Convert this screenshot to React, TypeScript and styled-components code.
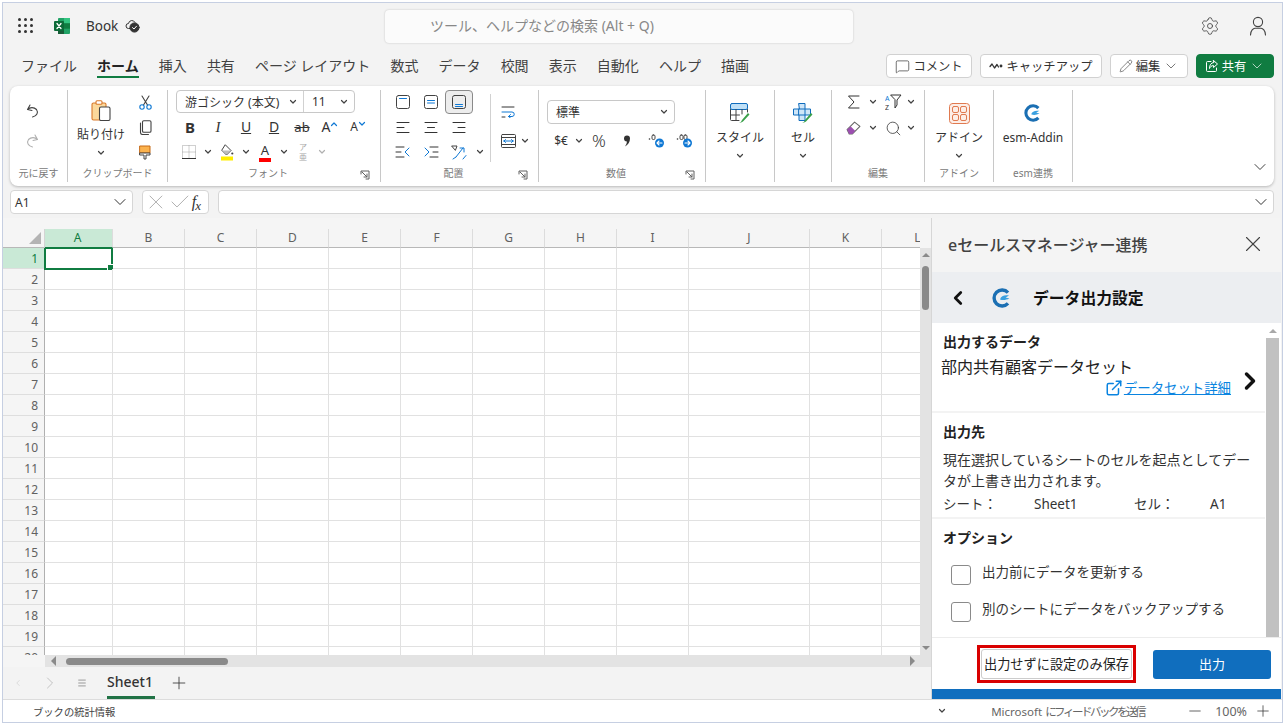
import React from 'react';
import styled, { createGlobalStyle } from 'styled-components';
import { Settings, MessageSquare, Pencil, X, Check, ChevronDown, ChevronLeft, ChevronRight, Plus, Minus, Menu, Search, ExternalLink } from 'lucide-react';

const FONT = `"Noto Sans", "Noto Sans CJK JP", sans-serif`;

const GlobalStyle = createGlobalStyle`
  html, body { margin: 0; padding: 0; background: #fff; }
  body { font-family: ${FONT}; color: #242424; }
  * { box-sizing: border-box; }
`;

const Page = styled.div`
  width: 1284px;
  height: 724px;
  padding: 2px 1px 1px 2px;
  background: #fff;
  overflow: hidden;
`;

const Window = styled.div`
  width: 100%;
  height: 100%;
  border: 1px solid #c6cfe2;
  background: #f3f3f3;
  display: flex;
  flex-direction: column;
`;

/* title bar */
const TitleBar = styled.div`
  height: 45px;
  flex: none;
  display: flex;
  align-items: center;
  padding-left: 15px;
`;

const Waffle = styled.div`
  width: 15px;
  display: grid;
  grid-template-columns: repeat(3, 3px);
  gap: 3px;
  margin-right: 21px;
  span { width: 3px; height: 3px; background: #333; border-radius: 50%; }
`;

const BookName = styled.span`
  font-size: 13.5px;
  line-height: 20px;
  color: #333;
  margin: 0 7px 0 16px;
`;

const SearchBox = styled.div`
  position: absolute;
  left: 385px;
  top: 10px;
  width: 468px;
  height: 33px;
  background: #fbfbfb;
  border-radius: 4px;
  box-shadow: 0 0 2px rgba(0, 0, 0, 0.22);
  padding-left: 45px;
  font-size: 14px;
  line-height: 32px;
  color: #888;
`;

const TitleRight = styled.div`
  margin-left: auto;
  display: flex;
  align-items: center;
  gap: 29px;
  padding-right: 15px;
`;

/* tab row */
const TabRow = styled.div`
  height: 38px;
  flex: none;
  display: flex;
  align-items: flex-start;
  padding: 6px 8px 0 18px;
`;

const Tab = styled.div<{ $active?: boolean }>`
  font-size: 14px;
  line-height: 24px;
  height: 24px;
  margin-right: 20.1px;
  color: ${p => (p.$active ? '#242424' : '#424242')};
  font-weight: ${p => (p.$active ? 700 : 400)};
  border-bottom: 2px solid ${p => (p.$active ? '#107c41' : 'transparent')};
  white-space: nowrap;
`;

const TabActions = styled.div`
  margin-left: auto;
  display: flex;
  gap: 8px;
`;

const ActionButton = styled.div<{ $w: number; $primary?: boolean }>`
  width: ${p => p.$w}px;
  height: 24px;
  display: flex;
  align-items: center;
  justify-content: center;
  gap: 3px;
  border-radius: 4px;
  font-size: 12.3px;
  white-space: nowrap;
  color: ${p => (p.$primary ? '#fff' : '#333')};
  background: ${p => (p.$primary ? '#107c41' : '#fff')};
  border: 1px solid ${p => (p.$primary ? '#107c41' : '#d1d1d1')};
`;

/* ribbon */
const Ribbon = styled.div`
  height: 100px;
  flex: none;
  margin: 0 8px 0 7px;
  padding-top: 4px;
  background: #fff;
  border-radius: 8px;
  box-shadow: 0 1px 3px rgba(0, 0, 0, 0.25);
  display: flex;
  position: relative;
`;

const Group = styled.div<{ $w: number }>`
  width: ${p => p.$w}px;
  height: 92px;
  flex: none;
  border-right: 1px solid #c8c8c8;
  display: flex;
  flex-direction: column;
`;

const GroupBody = styled.div<{ $pl?: number }>`
  height: 74px;
  flex: none;
  display: flex;
  padding-left: ${p => p.$pl ?? 0}px;
`;

const GroupFoot = styled.div`
  height: 18px;
  display: flex;
  align-items: center;
`;

const GroupLabel = styled.div`
  flex: 1;
  text-align: center;
  font-size: 10px;
  line-height: 18px;
  color: #7a7a7a;
  white-space: nowrap;
`;

const Launcher = styled.div`
  width: 12px;
  margin: 3px 8px 0 -8px;
`;

const Stack = styled.div<{ $w?: number; $gap?: number; $pt?: number }>`
  display: flex;
  flex-direction: column;
  width: ${p => (p.$w ? `${p.$w}px` : 'auto')};
  gap: ${p => p.$gap ?? 0}px;
  padding-top: ${p => p.$pt ?? 0}px;
`;

const Row = styled.div<{ $gap?: number; $h?: number; $pl?: number }>`
  display: flex;
  align-items: center;
  height: ${p => p.$h ?? 24}px;
  gap: ${p => p.$gap ?? 0}px;
  padding-left: ${p => p.$pl ?? 0}px;
`;

const Cellule = styled.div<{ $w: number; $h?: number; $on?: boolean }>`
  width: ${p => p.$w}px;
  height: ${p => p.$h ?? 24}px;
  flex: none;
  display: flex;
  align-items: center;
  justify-content: center;
  border-radius: 4px;
  background: ${p => (p.$on ? '#ededed' : 'transparent')};
  border: ${p => (p.$on ? '1px solid #8a8a8a' : 'none')};
`;

const BigLabel = styled.div`
  font-size: 12px;
  line-height: 18px;
  color: #333;
  text-align: center;
  white-space: nowrap;
`;

const BigButton = styled.div<{ $pt?: number }>`
  display: flex;
  flex-direction: column;
  align-items: center;
  width: 100%;
  padding-top: ${p => p.$pt ?? 7}px;
`;

const BigIcon = styled.div<{ $mb?: number }>`
  height: 26px;
  display: flex;
  align-items: center;
  justify-content: center;
  margin-bottom: ${p => p.$mb ?? 3}px;
`;

const BelowChevron = styled.div`
  margin-top: 6px;
  height: 6px;
`;

const Combo = styled.div<{ $w: number }>`
  width: ${p => p.$w}px;
  height: 24px;
  border: 1px solid #c8c8c8;
  border-radius: 4px;
  display: flex;
  align-items: center;
  background: #fff;
  font-size: 12px;
  color: #333;
`;

const ComboPart = styled.div<{ $w: number; $divider?: boolean }>`
  width: ${p => p.$w}px;
  height: 100%;
  padding: 0 6px 0 8px;
  display: flex;
  align-items: center;
  justify-content: space-between;
  white-space: nowrap;
  border-right: ${p => (p.$divider ? '1px solid #d1d1d1' : 'none')};
`;

const Glyph = styled.span<{ $size?: number; $weight?: number; $italic?: boolean; $deco?: string; $color?: string; $serif?: boolean }>`
  font-size: ${p => p.$size ?? 14}px;
  line-height: 16px;
  font-weight: ${p => p.$weight ?? 400};
  font-style: ${p => (p.$italic ? 'italic' : 'normal')};
  font-family: ${p => (p.$serif ? '"Liberation Serif", serif' : FONT)};
  text-decoration: ${p => p.$deco ?? 'none'};
  color: ${p => p.$color ?? '#333'};
`;

const FxSub = styled.span`
  font-size: 13px;
  position: relative;
  top: 3px;
  margin-left: -1px;
`;

const Caret = styled.span`
  align-self: flex-start;
  margin: 6px 0 0 0;
`;

const Phonetic = styled.span`
  display: flex;
  flex-direction: column;
  align-items: center;
  font-size: 8px;
  line-height: 10px;
  color: #a8a8a8;
`;

const InnerSeparator = styled.div`
  width: 1px;
  height: 68px;
  margin: 4px 0 0 3px;
  background: #d1d1d1;
`;

const CollapseRibbon = styled.div`
  position: absolute;
  right: 4px;
  bottom: 4px;
`;

/* formula bar */
const FormulaBar = styled.div`
  height: 24px;
  flex: none;
  margin: 4px 8px 4px 7px;
  display: flex;
  gap: 9px;
`;

const FormulaField = styled.div<{ $w?: number; $grow?: boolean }>`
  width: ${p => (p.$w ? `${p.$w}px` : 'auto')};
  flex: ${p => (p.$grow ? 1 : 'none')};
  background: #fff;
  border: 1px solid #d6d6d6;
  border-radius: 4px;
  display: flex;
  align-items: center;
  justify-content: space-between;
  padding: 0 2px 0 4px;
  font-size: 12px;
  color: #333;
`;

const FormulaTools = styled.div`
  display: flex;
  align-items: center;
  justify-content: space-between;
  width: 100%;
  margin-left: -3px;
  padding-right: 2px;
`;

/* workspace */
const Workspace = styled.div`
  height: 482px;
  flex: none;
  display: flex;
  border-bottom: 1px solid #dcdcdc;
`;

const SheetColumn = styled.div`
  width: 928px;
  flex: none;
  display: flex;
  flex-direction: column;
  padding-top: 11px;
  background: #f5f5f5;
`;

const SheetHeaders = styled.div`
  height: 19px;
  flex: none;
  display: flex;
  overflow: hidden;
  width: 917px;
`;

const Corner = styled.div`
  width: 42px;
  flex: none;
  display: flex;
  align-items: flex-end;
  justify-content: flex-end;
  padding: 0 3px 3px 0;
  border-right: 1px solid #d4d4d4;
  border-bottom: 1px solid #b8b8b8;
`;

const ColHead = styled.div<{ $w: number; $on?: boolean }>`
  width: ${p => p.$w}px;
  flex: none;
  text-align: center;
  padding-right: ${p => (p.$on ? 2 : 0)}px;
  font-size: 12px;
  line-height: 18px;
  color: ${p => (p.$on ? '#107c41' : '#616161')};
  background: ${p => (p.$on ? '#c9e9d6' : 'transparent')};
  border-right: 1px solid #dcdcdc;
  border-bottom: 1px solid ${p => (p.$on ? '#107c41' : '#b8b8b8')};
`;

const SheetBody = styled.div`
  height: 407px;
  flex: none;
  display: flex;
`;

const Cells = styled.div`
  width: 917px;
  flex: none;
  overflow: hidden;
  background: #fff;
`;

const GridRow = styled.div`
  display: flex;
  height: 21px;
`;

const RowHead = styled.div<{ $on?: boolean }>`
  width: 42px;
  flex: none;
  padding-right: 6px;
  text-align: right;
  font-size: 12px;
  line-height: 22px;
  color: ${p => (p.$on ? '#107c41' : '#616161')};
  background: ${p => (p.$on ? '#c9e9d6' : '#f5f5f5')};
  border-right: 1px solid #b0b0b0;
  border-bottom: 1px solid #dedede;
`;

const GridCell = styled.div<{ $w: number }>`
  width: ${p => p.$w}px;
  flex: none;
  position: relative;
  border-right: 1px solid #e1e1e1;
  border-bottom: 1px solid #e1e1e1;
`;

const Selection = styled.div`
  position: absolute;
  left: -1px;
  top: -1px;
  right: -1px;
  bottom: -2px;
  border: 2px solid #107c41;
  &::after {
    content: '';
    position: absolute;
    right: -3px;
    bottom: -3px;
    width: 5px;
    height: 5px;
    background: #107c41;
    border: 1px solid #fff;
  }
`;

const VScroll = styled.div`
  width: 11px;
  flex: none;
  background: #e3e3e3;
  display: flex;
  flex-direction: column;
  align-items: center;
  padding: 5px 0 5px;
`;

const VThumb = styled.div`
  width: 7px;
  height: 44px;
  margin-top: 9px;
  background: #8a8a8a;
  border-radius: 4px;
`;

const HScroll = styled.div`
  height: 12px;
  flex: none;
  margin-left: 42px;
  background: #e3e3e3;
  display: flex;
  align-items: center;
  padding: 0 16px 0 6px;
`;

const HThumb = styled.div`
  width: 162px;
  height: 7px;
  margin-left: 10px;
  background: #8a8a8a;
  border-radius: 4px;
`;

const Spacer = styled.div`
  flex: 1;
`;

const Triangle = styled.span<{ $dir: 'up' | 'down' | 'left' | 'right'; $size?: number; $color?: string }>`
  width: 0;
  height: 0;
  flex: none;
  border-style: solid;
  border-color: transparent;
  ${p => {
    const s = p.$size ?? 4;
    const c = p.$color ?? '#8a8a8a';
    if (p.$dir === 'up') return `border-width: 0 ${s}px ${s}px; border-bottom-color: ${c};`;
    if (p.$dir === 'down') return `border-width: ${s}px ${s}px 0; border-top-color: ${c};`;
    if (p.$dir === 'left') return `border-width: ${s}px ${s}px ${s}px 0; border-right-color: ${c};`;
    return `border-width: ${s}px 0 ${s}px ${s}px; border-left-color: ${c};`;
  }}
`;

const SheetTabs = styled.div`
  flex: 1;
  background: #f3f3f3;
  display: flex;
  align-items: center;
  padding-left: 10px;
`;

const SheetNavCell = styled.div<{ $w: number }>`
  width: ${p => p.$w}px;
  flex: none;
  display: flex;
  align-items: center;
  justify-content: center;
`;

const SheetTab = styled.div`
  height: 32px;
  width: 48px;
  margin: 0 12px 0 20px;
  font-size: 14px;
  font-weight: 500;
  line-height: 29px;
  color: #333;
  border-bottom: 3px solid #217346;
  white-space: nowrap;
`;

/* task pane */
const Pane = styled.div`
  width: 350px;
  flex: none;
  background: #fff;
  border-left: 1px solid #d6d6d6;
  display: flex;
  flex-direction: column;
`;

const PaneHead = styled.div`
  height: 54px;
  flex: none;
  background: #f4f4f4;
  display: flex;
  align-items: center;
  justify-content: space-between;
  padding: 0 15px 2px 16px;
  font-size: 16px;
  font-weight: 500;
  color: #424242;
`;

const PaneSub = styled.div`
  height: 51px;
  flex: none;
  background: #eceef1;
  display: flex;
  align-items: center;
  padding-left: 15px;
  font-size: 15.8px;
  font-weight: 700;
  color: #111;
`;

const PaneLogo = styled.span`
  margin: 0 21px 0 23px;
`;

const PaneMiddle = styled.div`
  height: 314px;
  flex: none;
  display: flex;
`;

const PaneContent = styled.div`
  width: 333px;
  flex: none;
  background: #f3f3f3;
  display: flex;
  flex-direction: column;
  gap: 2px;
  overflow: hidden;
`;

const Section = styled.div<{ $h: number }>`
  height: ${p => p.$h}px;
  flex: none;
  background: #fff;
  padding: 9px 12px 0 11px;
  position: relative;
`;

const SectionTitle = styled.div`
  font-size: 14px;
  line-height: 20px;
  font-weight: 700;
  color: #222;
`;

const DataName = styled.div`
  font-size: 16px;
  line-height: 24px;
  margin: 3px 0 0 -2px;
  color: #222;
  white-space: nowrap;
`;

const LinkRow = styled.div`
  display: flex;
  align-items: center;
  justify-content: flex-end;
  gap: 1px;
  padding-right: 22px;
`;

const DetailLink = styled.a`
  font-size: 13.4px;
  line-height: 18px;
  color: #0a84e0;
  text-decoration: underline;
  white-space: nowrap;
`;

const GoChevron = styled.div`
  position: absolute;
  right: 1.5px;
  top: 44px;
`;

const BodyText = styled.div`
  font-size: 14px;
  line-height: 21px;
  margin-top: 7px;
  color: #333;
`;

const Meta = styled.div`
  display: flex;
  font-size: 13.5px;
  line-height: 22px;
  color: #333;
  margin-top: 2px;
`;

const MetaItem = styled.span<{ $w: number }>`
  width: ${p => p.$w}px;
  flex: none;
  white-space: nowrap;
`;

const CheckLine = styled.label`
  display: flex;
  align-items: center;
  gap: 11px;
  padding-left: 8px;
  height: 20px;
  font-size: 13.5px;
  color: #333;
  white-space: nowrap;
`;

const CheckText = styled.span`
  line-height: 20px;
  margin-top: -7px;
`;

const CheckList = styled.div`
  display: flex;
  flex-direction: column;
  gap: 17px;
  margin-top: 17px;
`;

const CheckBox = styled.span`
  width: 20px;
  height: 20px;
  flex: none;
  background: #fff;
  border: 1px solid #8a8a8a;
  border-radius: 3px;
`;

const PaneScroll = styled.div`
  width: 13px;
  margin-left: 1px;
  flex: none;
  display: flex;
  flex-direction: column;
  align-items: center;
  padding-top: 6px;
`;

const PaneThumb = styled.div`
  width: 13px;
  flex: 1;
  margin-top: 5px;
  background: #c1c1c1;
`;

const PaneFoot = styled.div`
  height: 52px;
  flex: none;
  background: #fff;
  border-top: 1px solid #ececec;
  display: flex;
  align-items: flex-start;
  padding: 7px 10px 0 45px;
`;

const Annotated = styled.div`
  width: 159px;
  height: 38px;
  flex: none;
  border: 3px solid #d90000;
  padding: 1px 1px;
`;

const SecondaryButton = styled.div`
  height: 30px;
  background: #fff;
  border: 1px solid #ccc;
  border-radius: 3px;
  font-size: 13.2px;
  line-height: 28px;
  text-align: center;
  color: #222;
  white-space: nowrap;
`;

const PrimaryButton = styled.div`
  width: 119px;
  height: 29px;
  margin: 5px 0 0 17px;
  background: #106ebe;
  border-radius: 3px;
  font-size: 13px;
  line-height: 28px;
  text-align: center;
  color: #fff;
`;

const PaneBlue = styled.div`
  height: 10px;
  flex: none;
  background: #106ebe;
`;

/* status bar */
const StatusBar = styled.div`
  flex: 1;
  background: #fff;
  display: flex;
  align-items: center;
  padding-left: 30px;
  font-size: 10.3px;
  color: #444;
`;

const StatusRight = styled.div`
  margin-left: auto;
  display: flex;
  align-items: center;
  padding-right: 10px;
  font-size: 11.5px;
  color: #666;
`;

const StatusFeedback = styled.span`
  margin: 0 37px 0 45px;
  white-space: nowrap;
  width: 158px;
  flex: none;
`;

const Condensed = styled.span`
  letter-spacing: -2.5px;
`;

const StatusZoom = styled.span`
  margin: 0 7px 0 11px;
  font-size: 12.5px;
`;

const Ico = styled.svg`
  display: block;
  flex: none;
  fill: none;
  stroke-linecap: round;
  stroke-linejoin: round;
`;

const Chev = ({ color = '#424242', up = false }: { color?: string; up?: boolean }) => (
  <Ico width="8" height="6" viewBox="0 0 8 6" stroke={color} strokeWidth="1.2">
    <path d={up ? 'M1.500 4.500 4 2l2.500 2.500' : 'M1.500 1.500 4 4l2.500-2.500'} />
  </Ico>
);

const DialogMark = () => (
  <Ico width="10" height="10" viewBox="0 0 10 10" stroke="#616161" strokeWidth="1">
    <path d="M1 4V1h8v8H6M2 2l5 5M7 4v3H4" />
  </Ico>
);

const EsmLogo = ({ size = 20 }: { size?: number }) => (
  <Ico width={size} height={size} viewBox="0 0 20 20">
    <path d="M16 4.600A8 8 0 1 0 16 15.400" stroke="#1b6fb3" strokeWidth="3.400" strokeLinecap="butt" />
    <path d="M8 11.400C9 8 12.500 6.800 17 7.600L13.600 9.600 17.400 10.600C14 12.200 10.600 12.600 8 11.400Z" fill="#39a0e0" />
  </Ico>
);

const ExcelLogo = () => (
  <Ico width="16" height="16" viewBox="0 0 16 16">
    <rect x="4" y="0" width="12" height="16" rx="1" fill="#21a366" />
    <rect x="10" y="0" width="6" height="5.300" fill="#33c481" />
    <rect x="4" y="5.300" width="12" height="5.400" fill="#107c41" />
    <rect x="4" y="10.700" width="6" height="5.300" fill="#185c37" />
    <rect x="0" y="3" width="10" height="10" rx="1" fill="#0c6a38" />
    <path d="M3 5.500 7 10.500M7 5.500 3 10.500" stroke="#fff" strokeWidth="1.300" />
  </Ico>
);

const CloudCheck = () => (
  <Ico width="15" height="14" viewBox="0 0 15 14" stroke="#333" strokeWidth="1">
    <path d="M5 9.500H3.500a2.500 2.500 0 0 1 0-5 3.500 3.500 0 0 1 6.500-1.200" />
    <circle cx="9.500" cy="8.500" r="4.600" fill="#333" />
    <path d="M7.500 8.600 9 10l2.500-2.800" stroke="#fff" />
  </Ico>
);

const UserIcon = () => (
  <Ico width="18" height="20" viewBox="0 0 18 20" stroke="#424242" strokeWidth="1.100">
    <circle cx="9" cy="6" r="4.600" />
    <path d="M1.500 19c0-4.500 3-6.800 4.400-6.800h6.200c1.400 0 4.400 2.300 4.400 6.800" />
  </Ico>
);

const WaveIcon = () => (
  <Ico width="14" height="10" viewBox="0 0 14 10" stroke="#333" strokeWidth="1.300">
    <path d="M1 5.500 3 3l2.500 4L8 3.500l1.500 2.500" />
    <circle cx="12" cy="5" r="0.800" fill="#333" />
  </Ico>
);

const ShareIcon = () => (
  <Ico width="14" height="14" viewBox="0 0 14 14" stroke="#fff" strokeWidth="1">
    <path d="M6 2.500H2.500a1 1 0 0 0-1 1v8a1 1 0 0 0 1 1h8a1 1 0 0 0 1-1V9" />
    <path d="M8.500 1.500 12.500 5 8.500 8.500V6.600C6.500 6.600 5.300 7.600 4.500 9.500 4.500 6 6 3.800 8.500 3.500Z" />
  </Ico>
);

const UndoIcon = ({ color = '#424242', flip = false }: { color?: string; flip?: boolean }) => (
  <Ico width="13" height="14" viewBox="0 0 13 14" stroke={color} strokeWidth="1.100" style={flip ? { transform: 'scaleX(-1)' } : undefined}>
    <path d="M4 1 1.500 5.500 6 6.500M1.800 5.300C4 3 8 3 10.500 5.500c2 3 .5 6.500-4 7.500" />
  </Ico>
);

const PasteIcon = () => (
  <Ico width="20" height="21" viewBox="0 0 20 21">
    <path d="M2.500 3h11a1.500 1.500 0 0 1 1.500 1.500v14a1.500 1.500 0 0 1-1.500 1.500h-11A1.500 1.500 0 0 1 1 18.500v-14A1.500 1.500 0 0 1 2.500 3Z" fill="#fbd89b" stroke="#d9792a" strokeWidth="1.100" />
    <rect x="5" y="0.800" width="6" height="3.500" rx="1" fill="#fff" stroke="#d9792a" strokeWidth="1.100" />
    <rect x="8.500" y="7" width="10.500" height="13.500" rx="1.500" fill="#fff" stroke="#424242" strokeWidth="1.100" />
  </Ico>
);

const ScissorsIcon = () => (
  <Ico width="13" height="15" viewBox="0 0 13 15" strokeWidth="1.100">
    <path d="M3 1 8.500 10M10 1 4.500 10" stroke="#424242" />
    <circle cx="3" cy="12" r="2.200" stroke="#0f78d4" />
    <circle cx="10" cy="12" r="2.200" stroke="#0f78d4" />
  </Ico>
);

const CopyIcon = () => (
  <Ico width="13" height="15" viewBox="0 0 13 15" stroke="#424242" strokeWidth="1.100">
    <rect x="3.500" y="0.800" width="8.500" height="11.500" rx="1.300" />
    <path d="M1.500 3v9.500a2 2 0 0 0 2 2h6" />
  </Ico>
);

const BrushIcon = () => (
  <Ico width="12" height="15" viewBox="0 0 12 15">
    <path d="M1 1h10v7H1Z" fill="#fbb24d" stroke="#c66a17" />
    <path d="M1 8h10v2H7v4H5v-4H1Z" fill="#fff" stroke="#424242" />
  </Ico>
);

const BordersIcon = () => (
  <Ico width="14" height="14" viewBox="0 0 14 14" stroke="#a0a0a0" strokeWidth="1" strokeDasharray="1 1" style={{ strokeLinecap: 'butt' }}>
    <path d="M.5 .5h13v13H.5ZM7 .5v13M.5 7h13" />
    <path d="M0 13.500h14" stroke="#333" strokeDasharray="none" />
  </Ico>
);

const FillIcon = () => (
  <Ico width="14" height="17" viewBox="0 0 14 17">
    <path d="M5.500 1 11 6.500 6.500 11 2 6.500Z" stroke="#424242" />
    <path d="M2 6.500h8.500L6.500 10.500Z" fill="#bdbdbd" />
    <circle cx="12.300" cy="9.500" r="1.100" fill="#424242" />
    <rect x="1" y="12.500" width="12" height="4" fill="#ffee00" />
  </Ico>
);

const ColorBar = styled.span`
  display: flex;
  flex-direction: column;
  align-items: center;
  &::after {
    content: '';
    width: 12px;
    height: 4px;
    background: #f00;
  }
`;

const LinesIcon = ({ kind, indent }: { kind: 'left' | 'center' | 'right'; indent?: 'out' | 'in' }) => {
  if (indent) {
    return (
      <Ico width="16" height="12" viewBox="0 0 16 12" strokeWidth="1">
        <path d={indent === 'out' ? 'M1 1h8M1 6h5M1 11h8' : 'M7 1h8M10 6h5M7 11h8'} stroke="#333" />
        <path d={indent === 'out' ? 'M14 2 10 6l4 4' : 'M2 2l4 4-4 4'} stroke="#0f78d4" />
      </Ico>
    );
  }
  const d = {
    left: 'M1 1.500h12M1 6.500h7M1 11.500h12',
    center: 'M1 1.500h12M3.500 6.500h7M1 11.500h12',
    right: 'M1 1.500h12M6 6.500h7M1 11.500h12',
  }[kind];
  return (
    <Ico width="14" height="13" viewBox="0 0 14 13" stroke="#333" strokeWidth="1">
      <path d={d} />
    </Ico>
  );
};

const VAlignIcon = ({ lines }: { lines: string }) => (
  <Ico width="14" height="14" viewBox="0 0 14 14">
    <rect x="0.500" y="0.500" width="13" height="13" rx="2" stroke="#424242" />
    <path d={lines} stroke="#0f78d4" strokeWidth="1" />
  </Ico>
);

const OrientIcon = () => (
  <Ico width="17" height="15" viewBox="0 0 17 15" strokeWidth="1">
    <path d="M1 1h5L4.500 5Z" stroke="#424242" />
    <path d="M5 12 12 3M9 3h4v4M2 14l3-2M12 14l3-3.500" stroke="#0f78d4" />
  </Ico>
);

const WrapIcon = () => (
  <Ico width="14" height="12" viewBox="0 0 14 12" strokeWidth="1">
    <path d="M1 1h12M1 11h3" stroke="#333" />
    <path d="M1 6h10a2.200 2.200 0 0 1 0 4.500H7.500M9.500 8.500l-2 2 2 1.500" stroke="#0f78d4" />
  </Ico>
);

const MergeIcon = () => (
  <Ico width="15" height="14" viewBox="0 0 15 14" strokeWidth="1">
    <rect x="0.500" y="0.500" width="14" height="13" rx="1" stroke="#424242" />
    <path d="M0.500 3.500h14M0.500 10.500h14" stroke="#424242" />
    <path d="M2.500 7h10M4.500 5.500 3 7l1.500 1.500M10.500 5.500 12 7l-1.500 1.500" stroke="#0f78d4" />
  </Ico>
);

const DecimalIcon = ({ more }: { more?: boolean }) => (
  <Ico width="17" height="14" viewBox="0 0 17 14">
    <circle cx="1.500" cy="5" r="0.800" fill="#333" />
    <rect x="4" y="1" width="3" height="4.500" rx="1.200" stroke="#333" strokeWidth="0.900" />
    {more && <rect x="8" y="1" width="3" height="4.500" rx="1.200" stroke="#333" strokeWidth="0.900" />}
    <circle cx="11.500" cy="9" r="4.500" fill="#0f78d4" />
    <path d={more ? 'M9 9h5M12 7l2 2-2 2' : 'M14 9H9M11 7 9 9l2 2'} stroke="#fff" strokeWidth="1.100" />
  </Ico>
);

const CommaIcon = () => (
  <Ico width="8" height="12" viewBox="0 0 8 12">
    <path d="M1 3.500a3 3 0 1 1 6 0c0 3.500-2 6.500-5 8 1-1.500 1.800-3 1.900-5A3 3 0 0 1 1 3.500Z" fill="#333" />
  </Ico>
);

const StyleIcon = () => (
  <Ico width="20" height="21" viewBox="0 0 20 21">
    <rect x="0.500" y="0.500" width="17" height="6" rx="1.500" fill="#bfe0f7" stroke="#0f6cbd" />
    <path d="M0.500 6.500v10a1 1 0 0 0 1 1H9M6 6.500v11M0.500 12h9M12 6.500V11M17.500 6.500V9" stroke="#424242" />
    <path d="M9 20c2-.5 2.500-2 3-3l6-7 1.500 1.500-6 6.500c-1 .8-2.500 2-4.500 2Z" fill="#3aa04a" />
  </Ico>
);

const CellsIcon = () => (
  <Ico width="20" height="21" viewBox="0 0 20 21">
    <path d="M6 .5h6V6h5.500v6H12v5.500H6V12H.5V6H6Z" fill="#cfe6f8" stroke="#0f6cbd" />
    <path d="M6 6h6v6H6Z" stroke="#0f6cbd" />
    <path d="M9 20c2-.5 2.500-2 3-3l6-7 1.500 1.500-6 6.500c-1 .8-2.500 2-4.500 2Z" fill="#3aa04a" />
  </Ico>
);

const SigmaIcon = () => (
  <Ico width="13" height="14" viewBox="0 0 13 14" stroke="#333" strokeWidth="1">
    <path d="M12 1H1.500L7 7l-5.500 6H12" />
  </Ico>
);

const SortIcon = () => (
  <Ico width="17" height="17" viewBox="0 0 17 17">
    <text x="0" y="7" fontSize="7" fill="#0f78d4" fontFamily="Noto Sans">A</text>
    <text x="0" y="16" fontSize="7" fill="#333" fontFamily="Noto Sans">Z</text>
    <path d="M6 1h10l-4 5v5l-2 3V6Z" stroke="#333" strokeWidth="1" />
  </Ico>
);

const EraserIcon = () => (
  <Ico width="15" height="14" viewBox="0 0 14 13">
    <path d="M1 8 8 1l5 4-7 7H3Z" stroke="#666" fill="#fff" />
    <path d="M1 8 4.500 5l4 4L6 12H3Z" fill="#9c4fb0" />
  </Ico>
);

const AddinIcon = () => (
  <Ico width="21" height="21" viewBox="0 0 21 21" stroke="#e07a50" strokeWidth="1">
    <rect x="0.500" y="0.500" width="20" height="20" rx="3" fill="#fdeee7" />
    <rect x="3.500" y="3.500" width="6" height="6" rx="1.500" />
    <rect x="11.500" y="3.500" width="6" height="6" rx="1.500" />
    <rect x="3.500" y="11.500" width="6" height="6" rx="1.500" />
    <rect x="11.500" y="11.500" width="6" height="6" rx="1.500" />
  </Ico>
);

const CornerMark = () => (
  <Ico width="12" height="12" viewBox="0 0 12 12">
    <path d="M12 0v12H0Z" fill="#b4b4b4" />
  </Ico>
);

const TABS = ['ファイル', 'ホーム', '挿入', '共有', 'ページ レイアウト', '数式', 'データ', '校閲', '表示', '自動化', 'ヘルプ', '描画'];
const COLUMNS: [string, number][] = [
  ['A', 68], ['B', 72], ['C', 72], ['D', 72], ['E', 72], ['F', 72], ['G', 72], ['H', 72], ['I', 72], ['J', 121], ['K', 72], ['L', 72],
];
const ROWS = Array.from({ length: 20 }, (_, i) => i + 1);

const Dialog = () => (
  <Launcher>
    <DialogMark />
  </Launcher>
);

export default function App() {
  return (
    <>
      <GlobalStyle />
      <Page>
        <Window>
          <TitleBar>
            <Waffle>
              {Array.from({ length: 9 }, (_, i) => <span key={i} />)}
            </Waffle>
            <ExcelLogo />
            <BookName>Book</BookName>
            <CloudCheck />
            <SearchBox>ツール、ヘルプなどの検索 (Alt + Q)</SearchBox>
            <TitleRight>
              <Settings size={20} strokeWidth={1} color="#424242" />
              <UserIcon />
            </TitleRight>
          </TitleBar>

          <TabRow>
            {TABS.map(t => <Tab key={t} $active={t === 'ホーム'}>{t}</Tab>)}
            <TabActions>
              <ActionButton $w={86}><MessageSquare size={15} strokeWidth={1.100} />コメント</ActionButton>
              <ActionButton $w={122}><WaveIcon />キャッチアップ</ActionButton>
              <ActionButton $w={78}><Pencil size={14} strokeWidth={1} />編集<ChevronDown size={16} strokeWidth={1} /></ActionButton>
              <ActionButton $w={78} $primary><ShareIcon />共有<ChevronDown size={16} strokeWidth={1} /></ActionButton>
            </TabActions>
          </TabRow>

          <Ribbon>
            <Group $w={58}>
              <GroupBody>
                <Stack $w={44} $gap={6} $pt={9}>
                  <Cellule $w={44}><UndoIcon /></Cellule>
                  <Cellule $w={44}><UndoIcon color="#b0b0b0" flip /></Cellule>
                </Stack>
              </GroupBody>
              <GroupFoot><GroupLabel>元に戻す</GroupLabel></GroupFoot>
            </Group>

            <Group $w={100}>
              <GroupBody>
                <Stack $w={66}>
                  <BigButton $pt={7}>
                    <BigIcon $mb={3}><PasteIcon /></BigIcon>
                    <BigLabel>貼り付け</BigLabel>
                    <BelowChevron><Chev /></BelowChevron>
                  </BigButton>
                </Stack>
                <Stack $w={22} $gap={1}>
                  <Cellule $w={22}><ScissorsIcon /></Cellule>
                  <Cellule $w={22}><CopyIcon /></Cellule>
                  <Cellule $w={22}><BrushIcon /></Cellule>
                </Stack>
              </GroupBody>
              <GroupFoot><GroupLabel>クリップボード</GroupLabel></GroupFoot>
            </Group>

            <Group $w={213}>
              <GroupBody $pl={8}>
                <Stack $gap={1}>
                  <Combo $w={179}>
                    <ComboPart $w={127} $divider>游ゴシック (本文)<Chev /></ComboPart>
                    <ComboPart $w={50}>11<Chev /></ComboPart>
                  </Combo>
                  <Row $h={26}>
                    <Cellule $w={28}><Glyph $size={15} $weight={700}>B</Glyph></Cellule>
                    <Cellule $w={28}><Glyph $size={15} $italic $serif>I</Glyph></Cellule>
                    <Cellule $w={28}><Glyph $size={14} $deco="underline">U</Glyph></Cellule>
                    <Cellule $w={28}><Glyph $size={14} $deco="underline">D</Glyph></Cellule>
                    <Cellule $w={28}><Glyph $size={13} $deco="line-through">ab</Glyph></Cellule>
                    <Cellule $w={28}><Glyph $size={14}>A</Glyph><Caret><Chev color="#0f78d4" up /></Caret></Cellule>
                    <Cellule $w={28}><Glyph $size={12}>A</Glyph><Caret><Chev color="#0f78d4" /></Caret></Cellule>
                  </Row>
                  <Row $h={24}>
                    <Cellule $w={26}><BordersIcon /></Cellule>
                    <Cellule $w={12}><Chev /></Cellule>
                    <Cellule $w={26}><FillIcon /></Cellule>
                    <Cellule $w={12}><Chev /></Cellule>
                    <Cellule $w={26}><ColorBar><Glyph $size={13}>A</Glyph></ColorBar></Cellule>
                    <Cellule $w={12}><Chev /></Cellule>
                    <Cellule $w={26}><Phonetic><span>ア</span><span>亜</span></Phonetic></Cellule>
                    <Cellule $w={12}><Chev color="#b0b0b0" /></Cellule>
                  </Row>
                </Stack>
              </GroupBody>
              <GroupFoot><GroupLabel>フォント</GroupLabel><Dialog /></GroupFoot>
            </Group>

            <Group $w={158}>
              <GroupBody $pl={8}>
                <Stack $w={98} $gap={1}>
                  <Row>
                    <Cellule $w={28}><VAlignIcon lines="M3.500 3.500h7" /></Cellule>
                    <Cellule $w={28}><VAlignIcon lines="M3.500 5.500h7M3.500 8h7" /></Cellule>
                    <Cellule $w={28} $on><VAlignIcon lines="M3.500 9.500h7M3.500 11.500h7" /></Cellule>
                  </Row>
                  <Row>
                    <Cellule $w={28}><LinesIcon kind="left" /></Cellule>
                    <Cellule $w={28}><LinesIcon kind="center" /></Cellule>
                    <Cellule $w={28}><LinesIcon kind="right" /></Cellule>
                  </Row>
                  <Row>
                    <Cellule $w={28}><LinesIcon kind="left" indent="out" /></Cellule>
                    <Cellule $w={28}><LinesIcon kind="left" indent="in" /></Cellule>
                    <Cellule $w={28}><OrientIcon /></Cellule>
                    <Cellule $w={14}><Chev /></Cellule>
                  </Row>
                </Stack>
                <InnerSeparator />
                <Stack $pt={10} $gap={5}>
                  <Row><Cellule $w={34}><WrapIcon /></Cellule></Row>
                  <Row>
                    <Cellule $w={34}><MergeIcon /></Cellule>
                    <Cellule $w={0}><Chev /></Cellule>
                  </Row>
                </Stack>
              </GroupBody>
              <GroupFoot><GroupLabel>配置</GroupLabel><Dialog /></GroupFoot>
            </Group>

            <Group $w={167}>
              <GroupBody $pl={8}>
                <Stack $pt={10} $gap={5}>
                  <Combo $w={128}>
                    <ComboPart $w={126}>標準<Chev /></ComboPart>
                  </Combo>
                  <Row>
                    <Cellule $w={28}><Glyph $size={12}>$€</Glyph></Cellule>
                    <Cellule $w={8}><Chev /></Cellule>
                    <Cellule $w={32}><Glyph $size={17} $weight={300}>%</Glyph></Cellule>
                    <Cellule $w={24}><CommaIcon /></Cellule>
                    <Cellule $w={34}><DecimalIcon /></Cellule>
                    <Cellule $w={22}><DecimalIcon more /></Cellule>
                  </Row>
                </Stack>
              </GroupBody>
              <GroupFoot><GroupLabel>数値</GroupLabel><Dialog /></GroupFoot>
            </Group>

            <Group $w={69}>
              <GroupBody>
                <BigButton $pt={10}>
                  <BigIcon><StyleIcon /></BigIcon>
                  <BigLabel>スタイル</BigLabel>
                  <BelowChevron><Chev /></BelowChevron>
                </BigButton>
              </GroupBody>
              <GroupFoot />
            </Group>

            <Group $w={57}>
              <GroupBody>
                <BigButton $pt={10}>
                  <BigIcon><CellsIcon /></BigIcon>
                  <BigLabel>セル</BigLabel>
                  <BelowChevron><Chev /></BelowChevron>
                </BigButton>
              </GroupBody>
              <GroupFoot />
            </Group>

            <Group $w={93}>
              <GroupBody $pl={10}>
                <Stack $gap={2}>
                  <Row>
                    <Cellule $w={22}><SigmaIcon /></Cellule>
                    <Cellule $w={18}><Chev /></Cellule>
                    <Cellule $w={22}><SortIcon /></Cellule>
                    <Cellule $w={14}><Chev /></Cellule>
                  </Row>
                  <Row>
                    <Cellule $w={22}><EraserIcon /></Cellule>
                    <Cellule $w={18}><Chev /></Cellule>
                    <Cellule $w={22}><Search size={17} strokeWidth={1.100} color="#333" /></Cellule>
                    <Cellule $w={14}><Chev /></Cellule>
                  </Row>
                </Stack>
              </GroupBody>
              <GroupFoot><GroupLabel>編集</GroupLabel></GroupFoot>
            </Group>

            <Group $w={69}>
              <GroupBody>
                <BigButton $pt={10}>
                  <BigIcon><AddinIcon /></BigIcon>
                  <BigLabel>アドイン</BigLabel>
                  <BelowChevron><Chev /></BelowChevron>
                </BigButton>
              </GroupBody>
              <GroupFoot><GroupLabel>アドイン</GroupLabel></GroupFoot>
            </Group>

            <Group $w={79}>
              <GroupBody>
                <BigButton $pt={10}>
                  <BigIcon><EsmLogo size={18} /></BigIcon>
                  <BigLabel>esm-Addin</BigLabel>
                </BigButton>
              </GroupBody>
              <GroupFoot><GroupLabel>esm連携</GroupLabel></GroupFoot>
            </Group>

            <CollapseRibbon><ChevronDown size={20} strokeWidth={1.200} color="#424242" /></CollapseRibbon>
          </Ribbon>

          <FormulaBar>
            <FormulaField $w={123}>A1<ChevronDown size={20} strokeWidth={1.200} /></FormulaField>
            <FormulaField $w={67}>
              <FormulaTools>
                <X size={24} strokeWidth={1} color="#b0b0b0" />
                <Check size={24} strokeWidth={1} color="#b0b0b0" />
                <Glyph $size={16} $italic $serif>f<FxSub>x</FxSub></Glyph>
              </FormulaTools>
            </FormulaField>
            <FormulaField $grow><span /><ChevronDown size={20} strokeWidth={1.200} /></FormulaField>
          </FormulaBar>

          <Workspace>
            <SheetColumn>
              <SheetHeaders>
                <Corner><CornerMark /></Corner>
                {COLUMNS.map(([c, w]) => <ColHead key={c} $w={w} $on={c === 'A'}>{c}</ColHead>)}
              </SheetHeaders>
              <SheetBody>
                <Cells>
                  {ROWS.map(r => (
                    <GridRow key={r}>
                      <RowHead $on={r === 1}>{r}</RowHead>
                      {COLUMNS.map(([c, w]) => (
                        <GridCell key={c} $w={w}>{r === 1 && c === 'A' && <Selection />}</GridCell>
                      ))}
                    </GridRow>
                  ))}
                </Cells>
                <VScroll>
                  <Triangle $dir="up" />
                  <VThumb />
                  <Spacer />
                  <Triangle $dir="down" />
                </VScroll>
              </SheetBody>
              <HScroll>
                <Triangle $dir="left" $size={5} />
                <HThumb />
                <Spacer />
                <Triangle $dir="right" $size={5} />
              </HScroll>
              <SheetTabs>
                <SheetNavCell $w={10}><ChevronLeft size={20} strokeWidth={1} color="#b8b8b8" /></SheetNavCell>
                <SheetNavCell $w={54}><ChevronRight size={20} strokeWidth={1} color="#b8b8b8" /></SheetNavCell>
                <SheetNavCell $w={10}><Menu size={18} strokeWidth={1.100} color="#333" /></SheetNavCell>
                <SheetTab>Sheet1</SheetTab>
                <SheetNavCell $w={24}><Plus size={20} strokeWidth={1} color="#333" /></SheetNavCell>
              </SheetTabs>
            </SheetColumn>

            <Pane>
              <PaneHead>
                eセールスマネージャー連携
                <X size={26} strokeWidth={1} color="#424242" />
              </PaneHead>
              <PaneSub>
                <ChevronLeft size={22} strokeWidth={3} color="#111" />
                <PaneLogo><EsmLogo /></PaneLogo>
                データ出力設定
              </PaneSub>
              <PaneMiddle>
                <PaneContent>
                  <Section $h={88}>
                    <SectionTitle>出力するデータ</SectionTitle>
                    <DataName>部内共有顧客データセット</DataName>
                    <LinkRow>
                      <ExternalLink size={18} strokeWidth={2} color="#0a84e0" />
                      <DetailLink>データセット詳細</DetailLink>
                    </LinkRow>
                    <GoChevron><ChevronRight size={28} strokeWidth={3} color="#111" /></GoChevron>
                  </Section>
                  <Section $h={104}>
                    <SectionTitle>出力先</SectionTitle>
                    <BodyText>現在選択しているシートのセルを起点としてデータが上書き出力されます。</BodyText>
                    <Meta>
                      <MetaItem $w={91}>シート：</MetaItem>
                      <MetaItem $w={100}>Sheet1</MetaItem>
                      <MetaItem $w={76}>セル：</MetaItem>
                      <MetaItem $w={20}>A1</MetaItem>
                    </Meta>
                  </Section>
                  <Section $h={118}>
                    <SectionTitle>オプション</SectionTitle>
                    <CheckList>
                      <CheckLine><CheckBox /><CheckText>出力前にデータを更新する</CheckText></CheckLine>
                      <CheckLine><CheckBox /><CheckText>別のシートにデータをバックアップする</CheckText></CheckLine>
                    </CheckList>
                  </Section>
                </PaneContent>
                <PaneScroll>
                  <Triangle $dir="up" $color="#a8a8a8" />
                  <PaneThumb />
                </PaneScroll>
              </PaneMiddle>
              <PaneFoot>
                <Annotated><SecondaryButton>出力せずに設定のみ保存</SecondaryButton></Annotated>
                <PrimaryButton>出力</PrimaryButton>
              </PaneFoot>
              <PaneBlue />
            </Pane>
          </Workspace>

          <StatusBar>
            ブックの統計情報
            <StatusRight>
              <Chev />
              <StatusFeedback>Microsoft <Condensed>にフィードバックを送信</Condensed></StatusFeedback>
              <Minus size={18} strokeWidth={1} color="#333" />
              <StatusZoom>100%</StatusZoom>
              <Plus size={18} strokeWidth={1} color="#333" />
            </StatusRight>
          </StatusBar>
        </Window>
      </Page>
    </>
  );
}
